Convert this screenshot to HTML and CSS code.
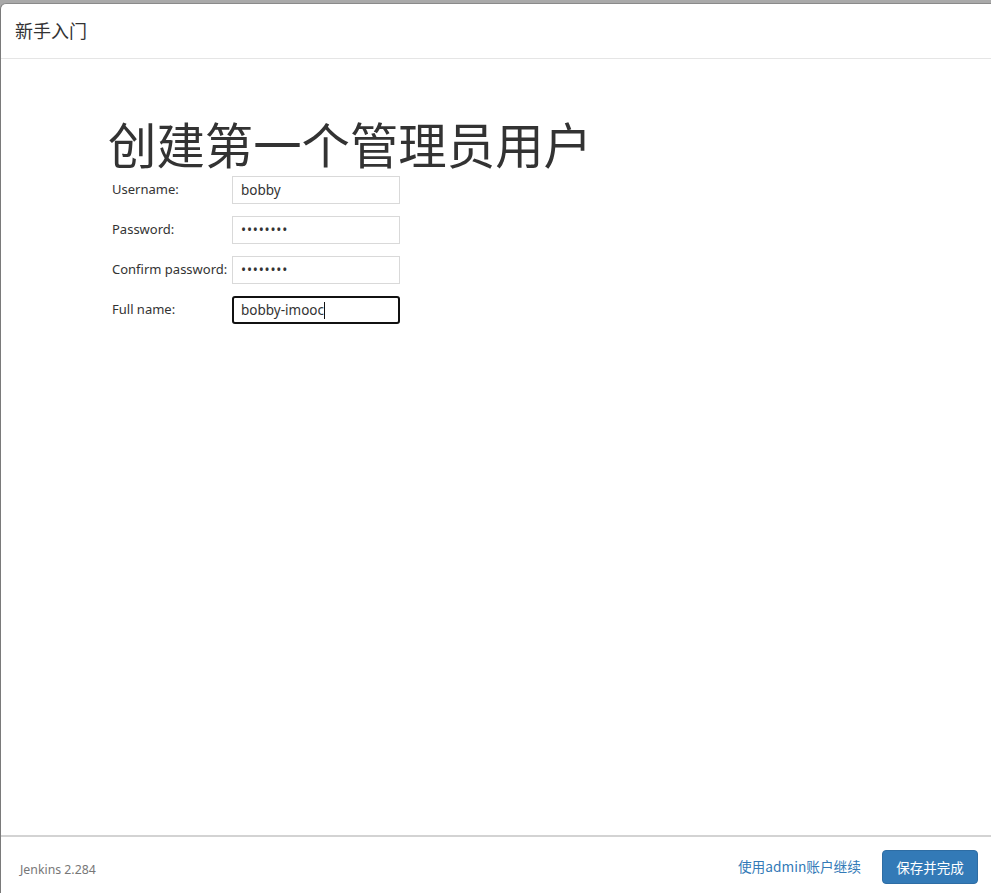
FILE: index.html
```html
<!DOCTYPE html>
<html lang="zh-CN">
<head>
<meta charset="utf-8">
<title>新手入门</title>
<link rel="stylesheet" href="styles.css">
</head>
<body>
<div class="dialog">
  <div class="header">新手入门</div>
  <div class="content">
    <h1 class="title">创建第一个管理员用户</h1>
    <form class="form">
      <div class="row">
        <label class="label">Username:</label>
        <input class="field" type="text" value="bobby" readonly>
      </div>
      <div class="row">
        <label class="label">Password:</label>
        <input class="field secret" type="password" value="password" readonly>
      </div>
      <div class="row">
        <label class="label">Confirm password:</label>
        <input class="field secret" type="password" value="password" readonly>
      </div>
      <div class="row">
        <label class="label">Full name:</label>
        <div class="field focused">bobby-imooc<span class="caret"></span></div>
      </div>
    </form>
  </div>
  <div class="footer">
    <span class="version">Jenkins 2.284</span>
    <a class="skip" href="#">使用admin账户继续</a>
    <button class="btn" type="button">保存并完成</button>
  </div>
</div>
</body>
</html>
```
FILE: styles.css
```css
html, body {
  margin: 0;
  padding: 0;
}
body {
  background: #a9a9a9;
  padding-top: 3px;
  font-family: "Noto Sans", "Noto Sans CJK SC", sans-serif;
  color: #333;
}
.dialog {
  height: 889px;
  background: #fff;
  border-left: 1px solid #7a7a7a;
  border-top: 1px solid #8a8a8a;
  border-top-left-radius: 6px;
  display: flex;
  flex-direction: column;
}
.header {
  height: 55px;
  flex: none;
  box-sizing: border-box;
  padding: 0 14px 2px;
  display: flex;
  align-items: center;
  font-size: 18px;
  border-bottom: 1px solid #e5e5e5;
  font-family: "Noto Sans CJK SC", sans-serif;
  color: #333;
}
.content {
  flex: 1;
  padding: 52px 0 0 107px;
}
.title {
  margin: 0;
  font-family: "Noto Sans CJK SC", sans-serif;
  font-weight: normal;
  font-size: 48.4px;
  line-height: 65px;
  color: #333;
}
.form {
  margin: 0;
}
.row {
  display: flex;
  align-items: flex-start;
  height: 28px;
  margin-bottom: 12px;
}
.label {
  width: 124px;
  box-sizing: border-box;
  padding-left: 4px;
  font-size: 13px;
  line-height: 26px;
  color: #333;
}
.field {
  width: 168px;
  height: 28px;
  box-sizing: border-box;
  margin: 0;
  border: 1px solid #d9d9d9;
  padding: 0 8px;
  font-family: "Noto Sans", sans-serif;
  font-size: 13.5px;
  color: #333;
  background: #fff;
  outline: none;
  border-radius: 0;
}
.secret {
  letter-spacing: 0.8px;
}
.focused {
  border: 2px solid #111;
  border-radius: 3px;
  padding: 0 7px;
  display: flex;
  align-items: center;
}
.caret {
  display: inline-block;
  width: 1px;
  height: 17px;
  background: #111;
}
.footer {
  flex: none;
  height: 56px;
  border-top: 2px solid #d3d3d3;
  display: flex;
  align-items: center;
  padding: 0 13px 0 19px;
}
.version {
  font-size: 12.3px;
  color: #777;
  margin-top: 8px;
  flex: 1;
}
.skip {
  font-family: "Noto Sans CJK SC", sans-serif;
  font-size: 13.7px;
  color: #337ab7;
  text-decoration: none;
  margin-right: 21px;
  margin-top: 2px;
}
.btn {
  height: 34px;
  width: 96px;
  margin-top: 3px;
  background: #337ab7;
  border: 1px solid #2e6da4;
  border-radius: 4px;
  color: #fff;
  font-family: "Noto Sans CJK SC", sans-serif;
  font-size: 13.5px;
  padding: 0;
}
```
